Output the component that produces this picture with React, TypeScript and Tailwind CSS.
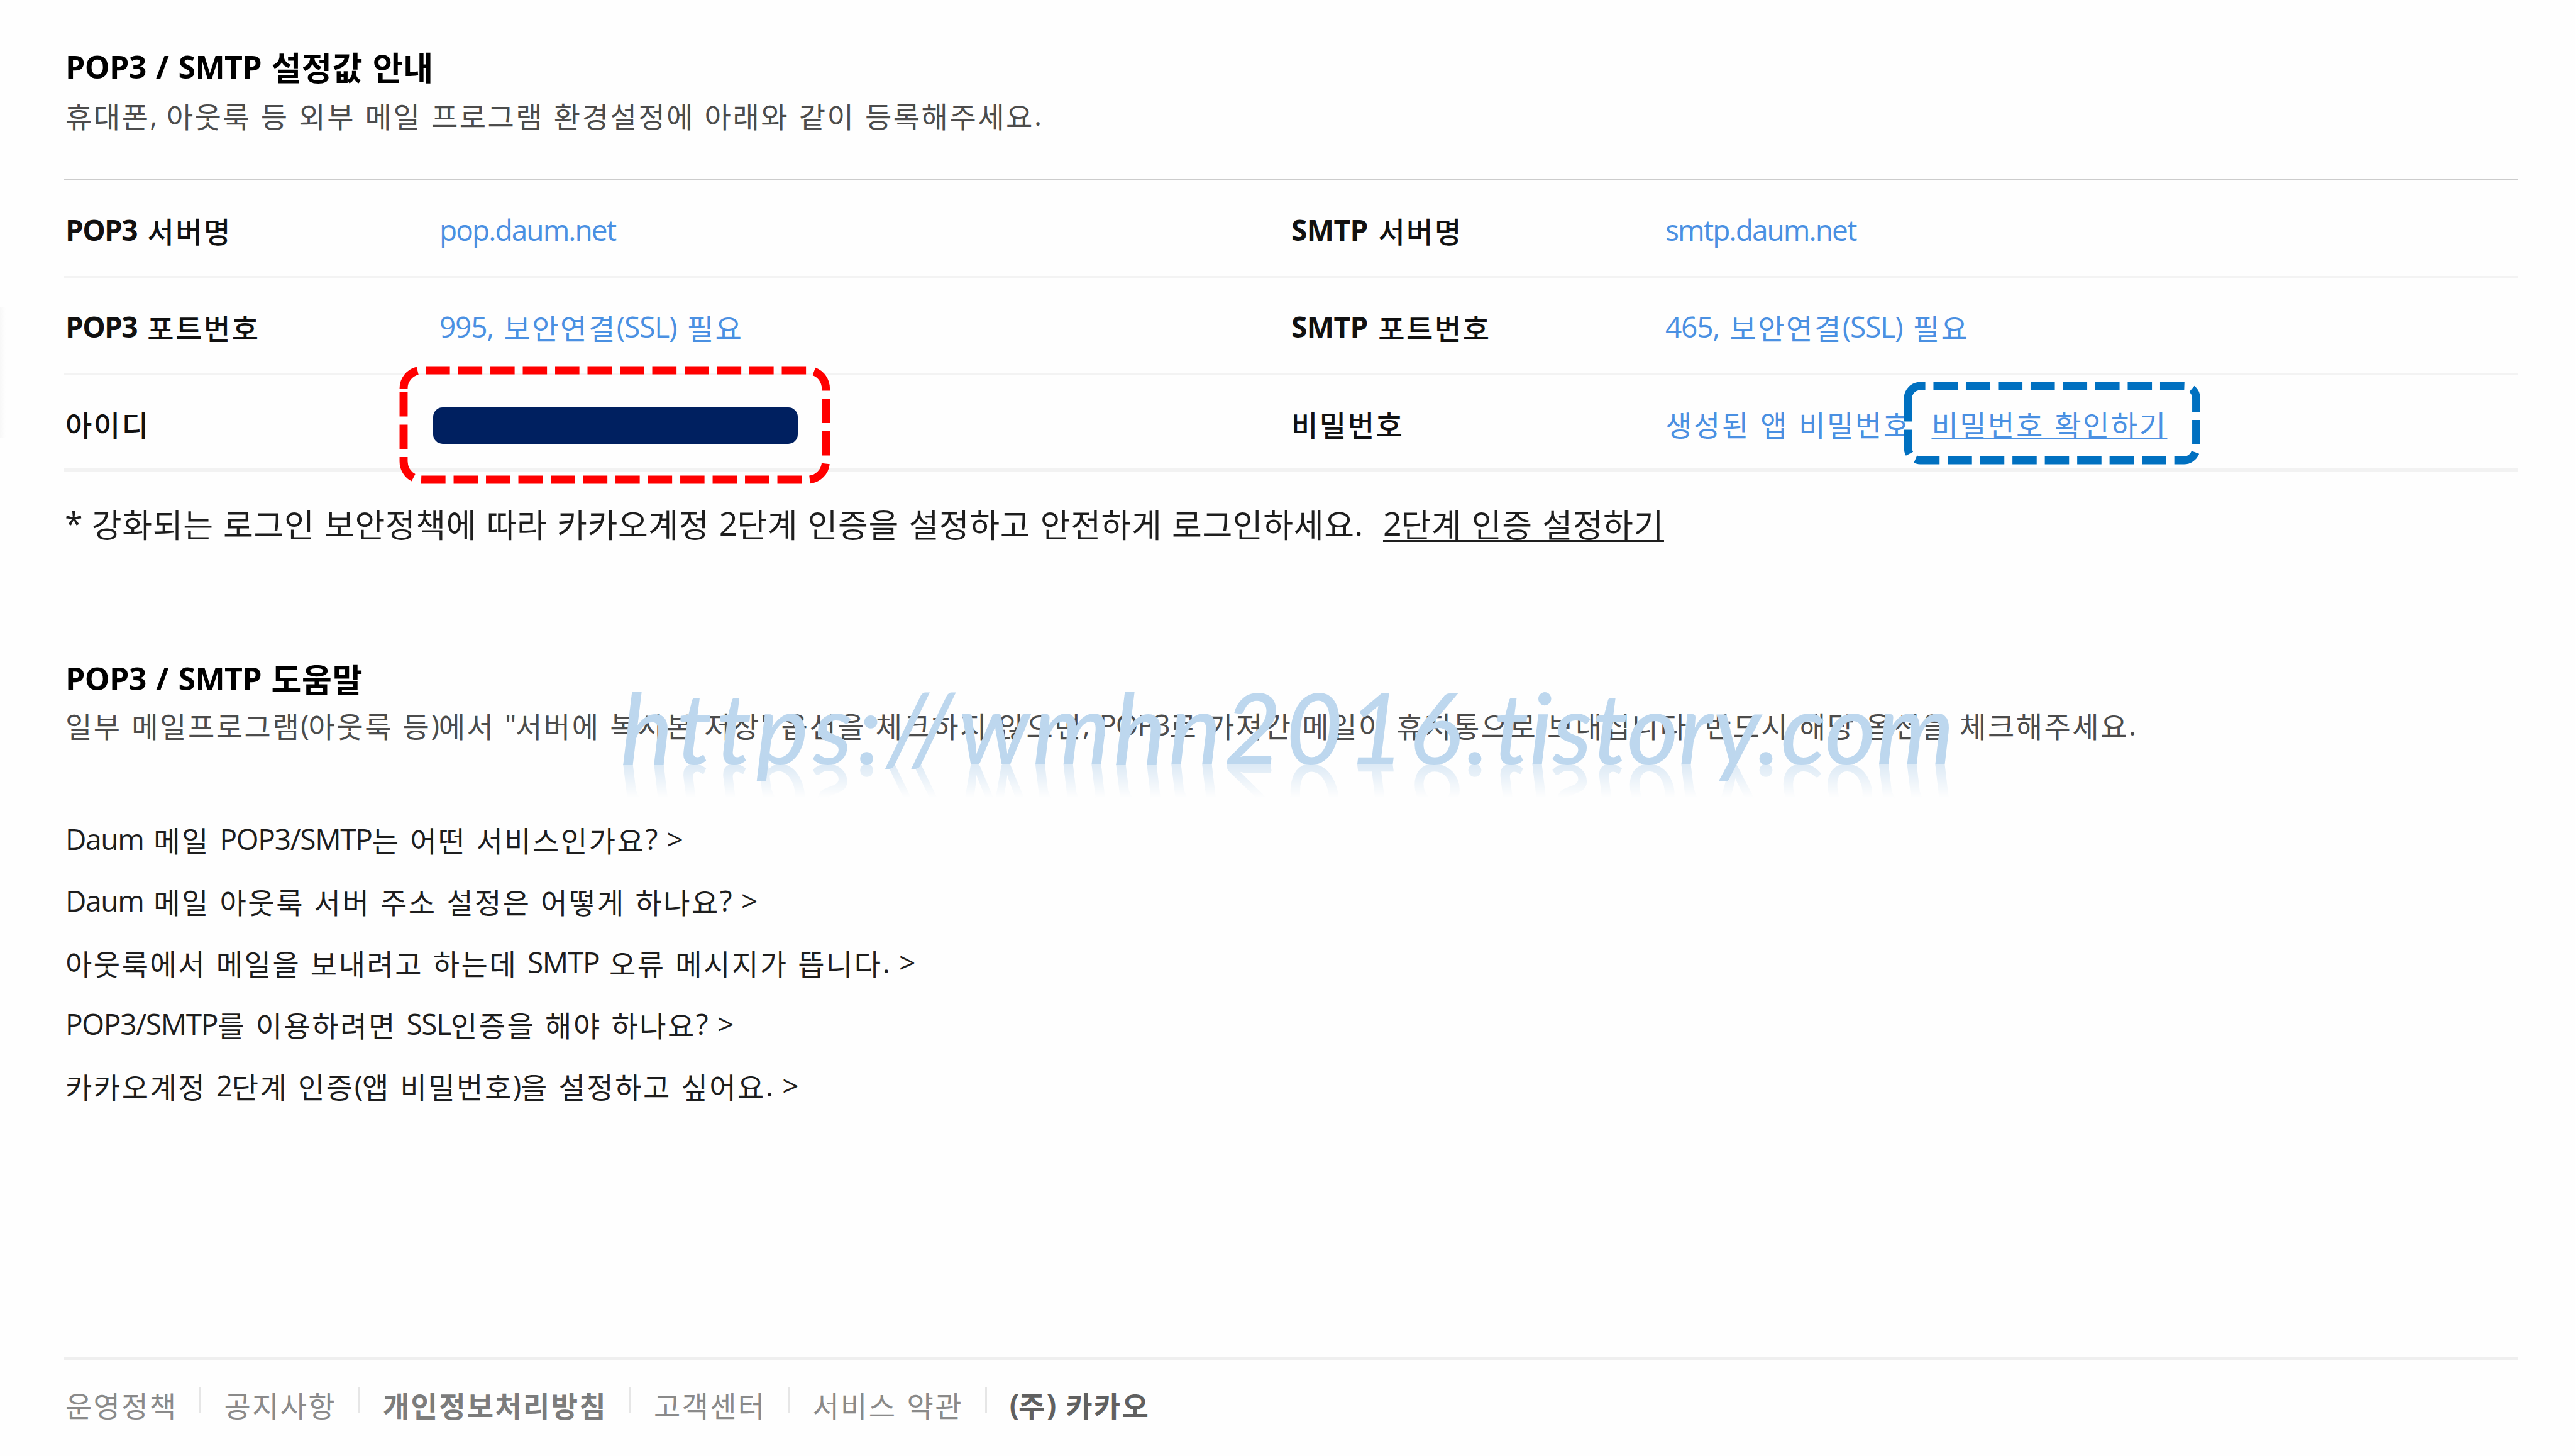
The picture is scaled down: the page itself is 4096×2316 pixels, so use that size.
import * as React from "react";

// Latin runs sit slightly higher and tighter than the Hangul around them
const T = ({ children, latin = "tracking-[-1.3px]" }: { children: string; latin?: string }) => (
  <span className="whitespace-pre">
    {children.split(/([!-~]+)/).map((part, i) =>
      i % 2 ? (
        <span key={i} className={`align-[3px] leading-none ${latin}`}>
          {part}
        </span>
      ) : (
        part
      )
    )}
  </span>
);

const settings = [
  ["POP3 서버명", "pop.daum.net", "SMTP 서버명", "smtp.daum.net"],
  ["POP3 포트번호", "995, 보안연결(SSL) 필요", "SMTP 포트번호", "465, 보안연결(SSL) 필요"],
];

const questions = [
  "Daum 메일 POP3/SMTP는 어떤 서비스인가요? >",
  "Daum 메일 아웃룩 서버 주소 설정은 어떻게 하나요? >",
  "아웃룩에서 메일을 보내려고 하는데 SMTP 오류 메시지가 뜹니다. >",
  "POP3/SMTP를 이용하려면 SSL인증을 해야 하나요? >",
  "카카오계정 2단계 인증(앱 비밀번호)을 설정하고 싶어요. >",
];

const policies = [
  { label: "운영정책", className: "text-[#8a8a8a]" },
  { label: "공지사항", className: "text-[#8a8a8a]" },
  { label: "개인정보처리방침", className: "font-bold text-[#7c7c7c]" },
  { label: "고객센터", className: "text-[#8a8a8a]" },
  { label: "서비스 약관", className: "text-[#8a8a8a]" },
  { label: "(주) 카카오", className: "font-bold text-[#606060]" },
];

const Title = ({ children }: { children: string }) => (
  <h2 className="pl-[2px] text-[52px] font-bold tracking-[0.8px] text-black [word-spacing:1px]">
    <T latin="text-[50px] tracking-[-0.6px]">{children}</T>
  </h2>
);

const Label = ({ children }: { children: string }) => (
  <span className="pl-[2px] font-medium text-[#111]">
    <T latin={children.startsWith("SMTP") ? "font-bold tracking-[-0.6px]" : "font-bold tracking-[-1.7px]"}>
      {children}
    </T>
  </span>
);

const Value = ({ children }: { children: string }) => (
  <span className="pl-[2px] text-[#4a90e2]">
    <T latin={children.endsWith(".net") ? "tracking-[-1.9px]" : "tracking-[-1.2px]"}>{children}</T>
  </span>
);

// Rounded outline drawn clockwise from the left edge, so the dashes start there
const DashedBox = ({ w, h, color, className }: { w: number; h: number; color: string; className: string }) => {
  const r = h / 6;
  return (
    <svg className={`absolute overflow-visible ${className}`} width={w} height={h} fill="none">
      <path
        d={`M0 ${r}A${r} ${r} 0 0 1 ${r} 0H${w - r}A${r} ${r} 0 0 1 ${w} ${r}V${h - r}A${r} ${r} 0 0 1 ${w - r} ${h}H${r}A${r} ${r} 0 0 1 0 ${h - r}Z`}
        stroke={color}
        strokeWidth={12.9}
        strokeDasharray="38.6 12.9"
      />
    </svg>
  );
};

const SiteName = () => (
  <>
    <span className="tracking-[7px]">https://</span>
    <span className="tracking-[4.4px]">wmhn</span>
    <span className="tracking-[7px]">2016.</span>
    <span className="tracking-[0.5px]">tistory.com</span>
  </>
);

export default function App() {
  return (
    <div className="relative flex h-[2316px] w-[4096px] flex-col overflow-hidden bg-[#fefefe] pl-[102px] pr-[91px] font-['Open_Sans','Noto_Sans_CJK_KR',sans-serif] text-[46px] leading-[60px] tracking-[2.5px] text-[#1e1e1e] [word-spacing:2px]">
      <header className="pt-[78px]">
        <Title>POP3 / SMTP 설정값 안내</Title>
        <p className="mt-[17px] pl-[2px] text-[#4c4c4c] [word-spacing:1.2px]">
          <T>휴대폰, 아웃룩 등 외부 메일 프로그램 환경설정에 아래와 같이 등록해주세요.</T>
        </p>
      </header>

      <section className="mt-[69px] border-t-[3px] border-[#ccc]">
        {settings.map(([label, value, label2, value2]) => (
          <div
            key={label}
            className="grid h-[154.5px] grid-cols-[595px_1355px_595px_1fr] items-center border-b-[3px] border-[#f3f3f3] pt-[10px]"
          >
            <Label>{label}</Label>
            <Value>{value}</Value>
            <Label>{label2}</Label>
            <Value>{value2}</Value>
          </div>
        ))}
        <div className="grid h-[154px] grid-cols-[587px_1363px_595px_1fr] items-center border-b-[5px] border-[#f2f2f2] pt-[10px]">
          <Label>아이디</Label>
          <div className="mt-[3px] h-[58px] w-[580px] rounded-[15px] bg-[#002060]" />
          <Label>비밀번호</Label>
          <span className="flex pl-[2px] text-[#4a90e2]">
            <T>생성된 앱 비밀번호</T>
            <a href="#" className="ml-[32px] underline decoration-[3px] underline-offset-[2px] [text-decoration-skip-ink:none]">
              <T>비밀번호 확인하기</T>
            </a>
          </span>
        </div>
      </section>

      <p className="mt-[55px] flex pl-[1px] text-[52px] tracking-[0.6px] [word-spacing:1.4px]">
        <T>* 강화되는 로그인 보안정책에 따라 카카오계정 2단계 인증을 설정하고 안전하게 로그인하세요.</T>
        <a href="#" className="ml-[33px] underline decoration-[3px] underline-offset-[4px] [text-decoration-skip-ink:none]">
          <T>2단계 인증 설정하기</T>
        </a>
      </p>

      <section className="mt-[186px]">
        <Title>POP3 / SMTP 도움말</Title>
        <p className="mt-[14px] pl-[2px] text-[#4c4c4c] [word-spacing:1.2px]">
          <T>일부 메일프로그램(아웃룩 등)에서 "서버에 복사본 저장" 옵션을 체크하지 않으면, POP3로 가져간 메일이 휴지통으로 보내집니다. 반드시 해당 옵션을 체크해주세요.</T>
        </p>
        <ul className="mt-[122px] flex flex-col pl-[2px] [word-spacing:1.2px]">
          {questions.map((q) => (
            <li key={q} className="h-[98px]">
              <T>{q}</T>
            </li>
          ))}
        </ul>
      </section>

      <footer className="mt-auto h-[158px] border-t-[5px] border-[#efefef]">
        <ul className="flex pt-[43px] pl-[2px] tracking-[2.3px]">
          {policies.map(({ label, className }, i) => (
            <li key={label} className={`flex ${className}`}>
              {i > 0 && <i className="mr-[36px] ml-[35px] h-[42px] w-[3px] bg-[#e6e6e6]" />}
              <T>{label}</T>
            </li>
          ))}
        </ul>
      </footer>

      {/* Marks laid over the page */}
      <DashedBox w={671.6} h={174} color="#f00" className="top-[588.6px] left-[642px]" />
      <DashedBox w={458.5} h={118} color="#0070c0" className="top-[613.6px] left-[3034.5px]" />
      <div className="absolute top-[489px] left-0 h-[208px] w-[9px] bg-linear-to-r from-[#f8f8f8] to-[#fefefe]" />

      {/* Site name with its reflection under the baseline */}
      <div className="absolute top-[1061px] left-[987px] flex flex-col items-start font-['Lato',sans-serif] text-[157px] leading-[188px] font-medium whitespace-nowrap text-[#bdd7ee] italic [font-variant-ligatures:none]">
        <div>
          <SiteName />
        </div>
        <div
          aria-hidden
          className="-mt-[66px] -scale-y-100 [mask-image:linear-gradient(to_top,transparent_33px,rgba(0,0,0,0.5)_33px,transparent_86px)]"
        >
          <SiteName />
        </div>
      </div>
    </div>
  );
}
